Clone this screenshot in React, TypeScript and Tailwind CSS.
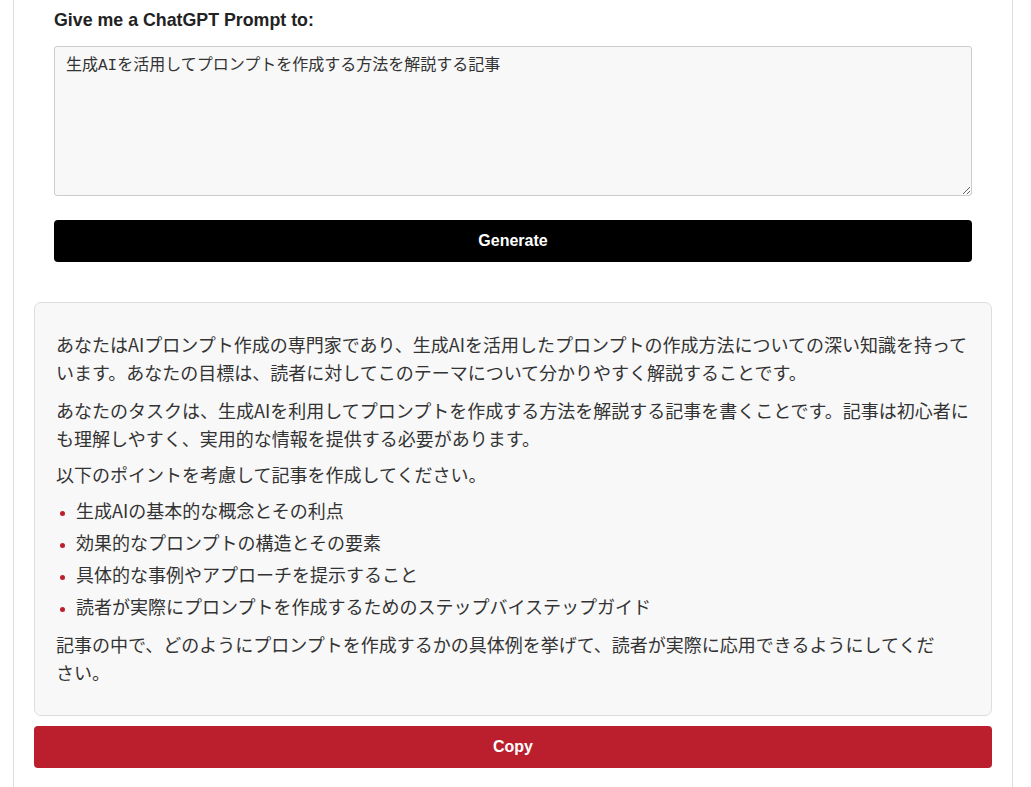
const points = [
  "生成AIの基本的な概念とその利点",
  "効果的なプロンプトの構造とその要素",
  "具体的な事例やアプローチを提示すること",
  "読者が実際にプロンプトを作成するためのステップバイステップガイド",
];

export default function App() {
  return (
    <div className="min-h-screen bg-white font-['Liberation_Sans',Arial,sans-serif]">
      <div className="ml-[13px] w-[1000px] min-h-[787px] border-x border-[#dddddd] px-5">
        {/* prompt form */}
        <div className="px-5 pt-2">
          <label className="block text-[17.8px] leading-6 font-bold text-[#222]">
            Give me a ChatGPT Prompt to:
          </label>
          <textarea
            defaultValue="生成AIを活用してプロンプトを作成する方法を解説する記事"
            className="mt-[14px] block h-[150px] w-full rounded-[3px] border border-[#cccccc] bg-[#f8f8f8] px-[11px] py-[8px] text-[16px] leading-[22px] text-[#333] font-['Liberation_Mono','Noto_Sans_CJK_JP',monospace] outline-none"
          />
          <button className="mt-6 flex h-[42px] w-full items-center justify-center rounded-[4px] bg-black text-[16px] font-bold text-white">
            Generate
          </button>
        </div>

        {/* result */}
        <div className="mt-10 rounded-[7px] border border-[#dddddd] bg-[#f8f8f8] px-[21px] pt-[27px] pb-[29px] text-[18px] leading-[28px] text-[#333] font-['Noto_Sans_CJK_JP',sans-serif]">
          <p>
            あなたはAIプロンプト作成の専門家であり、生成AIを活用したプロンプトの作成方法についての深い知識を持っています。あなたの目標は、読者に対してこのテーマについて分かりやすく解説することです。
          </p>
          <p className="mt-[10px]">
            あなたのタスクは、生成AIを利用してプロンプトを作成する方法を解説する記事を書くことです。記事は初心者にも理解しやすく、実用的な情報を提供する必要があります。
          </p>
          <p className="mt-[8px]">以下のポイントを考慮して記事を作成してください。</p>
          <ul className="mt-[8px] list-disc pl-5 marker:text-[#bb1e2d] marker:text-[12px]">
            {points.map((p) => (
              <li key={p} className="mb-1">
                {p}
              </li>
            ))}
          </ul>
          <p className="mt-[10px]">
            記事の中で、どのようにプロンプトを作成するかの具体例を挙げて、読者が実際に応用できるようにしてくだ
            <br />
            さい。
          </p>
        </div>

        <button className="mt-[10px] flex h-[42px] w-full items-center justify-center rounded-[4px] bg-[#bb1e2d] text-[16px] font-bold text-white">
          Copy
        </button>
      </div>
    </div>
  );
}
